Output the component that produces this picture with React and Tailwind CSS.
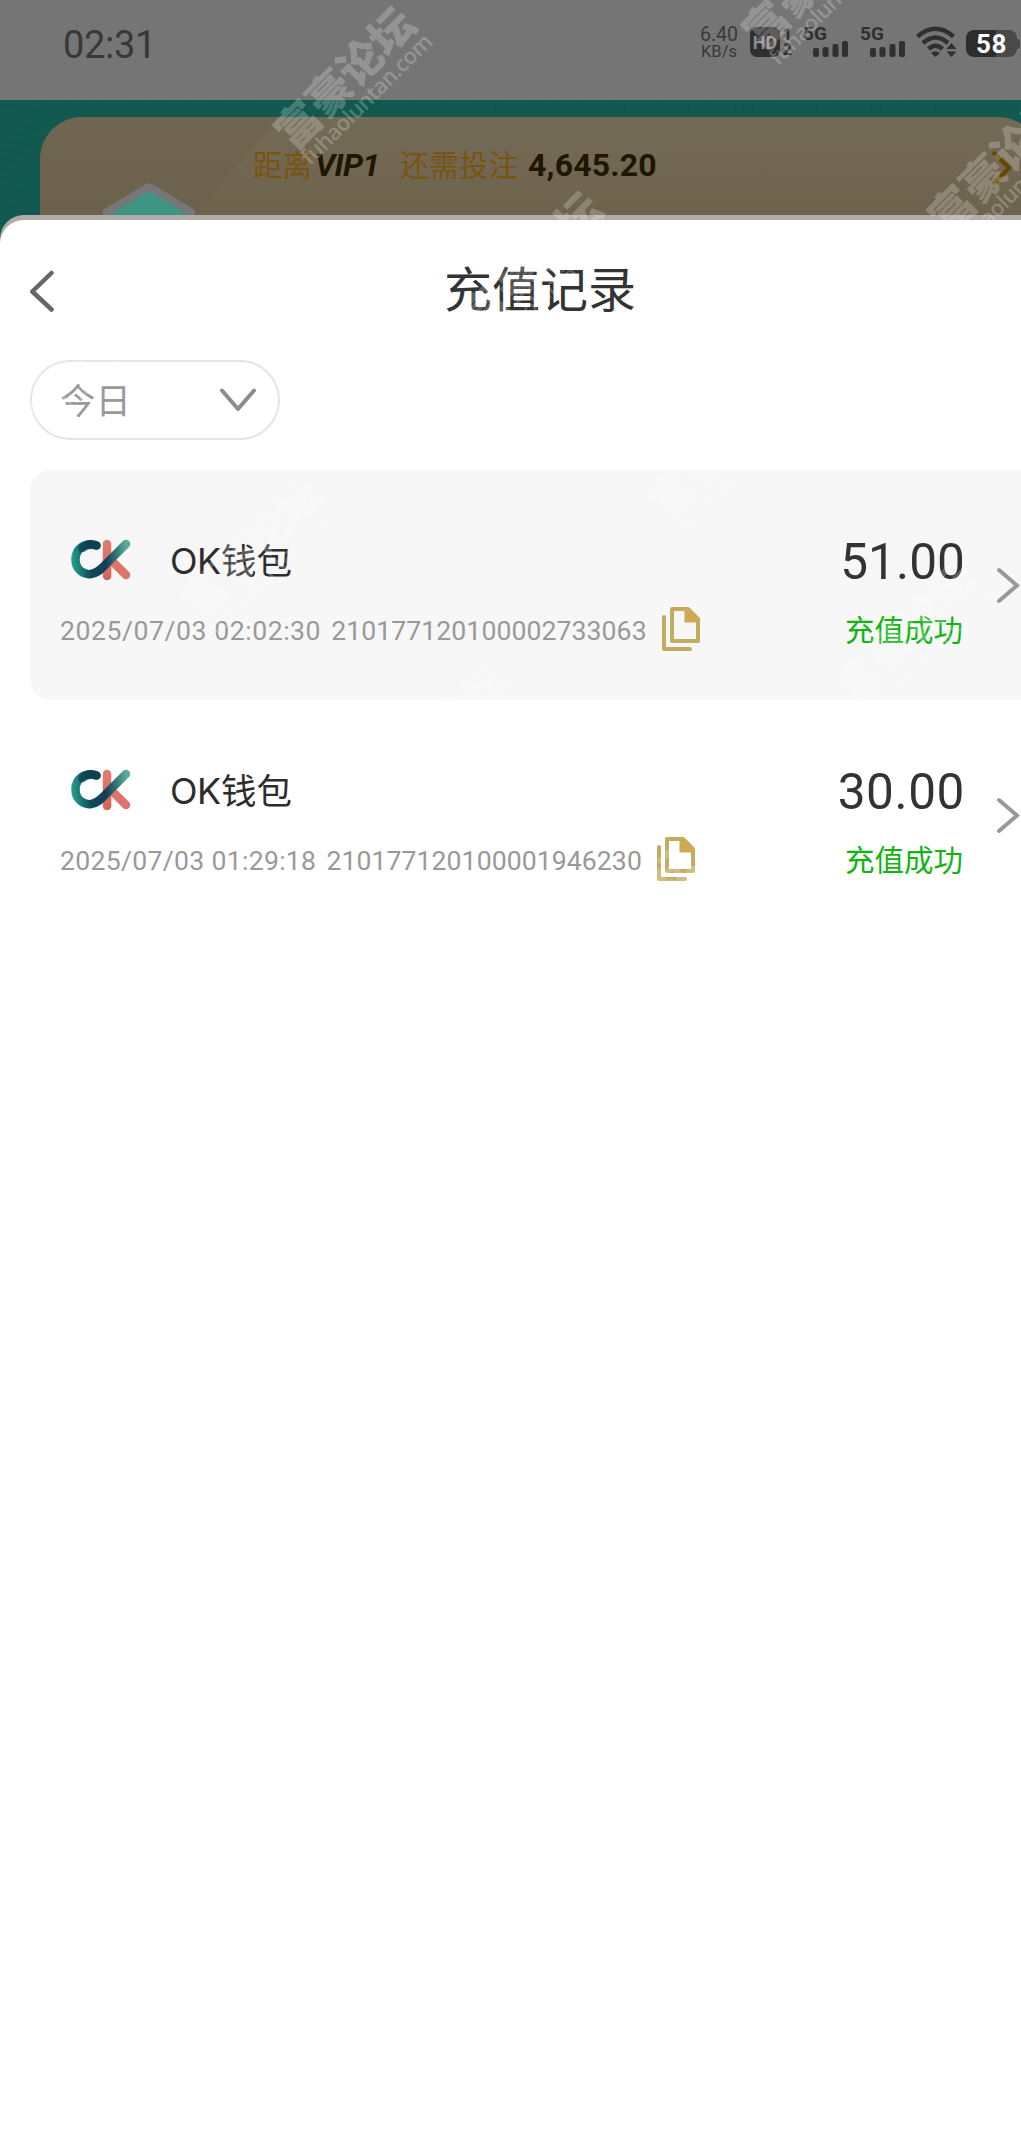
import React from "react";

const records = [
  {
    name: "钱包",
    time: "2025/07/03 02:02:30",
    timeClass: "tracking-[0.550px]",
    order: "210177120100002733063",
    amount: "51.00",
    amountClass: "tracking-[0.100px]",
    active: true,
  },
  {
    name: "钱包",
    time: "2025/07/03 01:29:18",
    timeClass: "tracking-[0.300px]",
    order: "210177120100001946230",
    amount: "30.00",
    amountClass: "tracking-[0.600px]",
    active: false,
  },
];

const marks = [
  [352, 85],
  [820, -15],
  [539, 270],
  [1006, 170],
  [72, 370],
  [726, 455],
  [259, 555],
  [913, 640],
  [446, 740],
  [633, 925],
];

function Watermarks() {
  return (
    <div className="absolute inset-0 overflow-hidden pointer-events-none">
      {marks.map(([x, y]) => (
        <div
          key={`${x}-${y}`}
          className="absolute w-[200px] h-[72px] -ml-[100px] -mt-[36px] -rotate-45 text-center text-white/24 whitespace-nowrap"
          style={{ left: x, top: y }}
        >
          <div className="font-['Noto_Sans_CJK_SC',sans-serif] font-black text-[44px] leading-[46px]">富豪论坛</div>
          <div className="-mt-[4px] font-['Open_Sans',sans-serif] font-semibold text-[22px] leading-[26px] tracking-[-0.600px]">fuhaoluntan.com</div>
        </div>
      ))}
    </div>
  );
}

function Signal() {
  return (
    <div className="w-[45px] h-[30px] flex flex-col">
      <span className="font-bold text-[19px] leading-[14px] h-[14px]">5G</span>
      <svg className="ml-[10px] w-[36px] h-[16px]" viewBox="0 0 36 16" fill="#303030">
        <rect x="0" y="7" width="6" height="9" rx="2" />
        <rect x="9.5" y="6" width="6" height="10" rx="2" />
        <rect x="19.5" y="3" width="6" height="13" rx="2" />
        <rect x="29" y="0" width="6" height="16" rx="2" />
      </svg>
    </div>
  );
}

function StatusBar() {
  return (
    <div className="h-[100px] bg-[#757575] flex items-start text-[#303030]">
      <div className="ml-[63px] mt-[25px] w-[95px] text-[38px] leading-[40px] tracking-[-0.300px] text-[#383838]">02:31</div>
      <div className="ml-[540px] mt-[26px] w-[42px] text-center text-[#383838]">
        <div className="text-[19.500px] leading-[17px]">6.40</div>
        <div className="text-[16.500px] leading-[17px]">KB/s</div>
      </div>
      <div className="ml-[10px] mt-[27px] w-[30px] h-[30px] rounded-[7px] bg-[#303030] text-[#8a8a8a] font-bold text-[18px] leading-[31px] text-center">
        HD
      </div>
      <div className="ml-[2px] mt-[27px] w-[11px] text-center font-bold text-[17px] leading-[15px]">
        <div>1</div>
        <div>2</div>
      </div>
      <div className="ml-[10px] mt-[27px]">
        <Signal />
      </div>
      <div className="ml-[12px] mt-[27px]">
        <Signal />
      </div>
      <svg className="ml-[11px] mt-[26px] w-[42px] h-[32px]" viewBox="0 0 42 32" fill="none" stroke="#303030" strokeWidth="4.500">
        <path d="M1.5 10.5 Q19.500 -5 37.500 10.500" />
        <path d="M7 17 Q19.500 6 32 17" />
        <path d="M12.500 23 Q19.500 16.500 26.500 23" />
        <path d="M15 27 Q19.500 23.500 24 27 L19.500 31 Z" fill="#303030" stroke="none" />
        <path d="M30.500 23 L35.500 17 L40.500 23 Z M30.500 25.500 L35.500 31 L40.500 25.500 Z" fill="#303030" stroke="none" />
      </svg>
      <div className="ml-[8px] mt-[30px] flex items-center">
        <div className="w-[51px] h-[27px] rounded-[8px] bg-linear-to-r from-[#2d2d2d] from-58% to-[#494949] to-58% text-white font-bold text-[26px] leading-[29px] tracking-[0.500px] text-center">
          58
        </div>
        <div className="w-[3px] h-[10px] rounded-r-[3px] bg-[#494949]" />
      </div>
    </div>
  );
}

function VipBanner() {
  return (
    <div className="relative h-[140px] px-[40px] pt-[17px] bg-[#125a4f] bg-[repeating-radial-gradient(circle_at_0_140px,#125a4f_0,#125a4f_7px,#15544c_9px)]">
      <div className="relative h-[123px] rounded-t-[42px] overflow-hidden bg-linear-to-b from-[#746b57] to-[#6c6049] flex">
        <svg className="absolute left-0 top-0 w-[300px] h-[123px]" viewBox="0 0 300 123">
          <path d="M0 0 H240 L150 102 V123 H0 Z" fill="#6b604c" opacity="0.45" />
          <path d="M63 93 L104 68 Q109 65 114 68 L155 93 V123 H63 Z" fill="#77777a" />
          <path d="M72 96 L105 76 Q109 74 113 76 L145 96 V123 H72 Z" fill="#3f9483" />
        </svg>
        <div className="mt-[26px] ml-[213px] flex items-center h-[44px] leading-[44px] whitespace-nowrap">
          <span className="-mt-[4px] w-[62px] font-['Noto_Sans_CJK_SC',sans-serif] text-[29.500px] text-[#79540f]">距离</span>
          <span className="w-[85px] font-bold italic text-[32px] tracking-[-0.700px] text-[#1f1600]">VIP1</span>
          <span className="-mt-[4px] w-[128px] font-['Noto_Sans_CJK_SC',sans-serif] text-[29.500px] text-[#79540f]">还需投注</span>
          <span className="font-bold text-[32px] tracking-[0.200px] text-[#1f1600]">4,645.20</span>
        </div>
        <svg className="ml-auto mr-[27px] mt-[32px] w-[22px] h-[38px]" viewBox="0 0 22 38" fill="none" stroke="#664600" strokeWidth="4">
          <path d="M2 3 L18 19 L2 35" />
        </svg>
      </div>
    </div>
  );
}

function WalletLogo({ id }) {
  return (
    <svg className="w-[60px] h-[42px]" viewBox="0 0 60 42" fill="none" strokeLinecap="round" strokeWidth="8.500">
      <defs>
        <linearGradient id={`${id}-c`} gradientUnits="userSpaceOnUse" x1="2" y1="20" x2="56" y2="14">
          <stop offset="0" stopColor="#249a87" />
          <stop offset="0.3" stopColor="#0d4a5a" />
          <stop offset="0.600" stopColor="#133f58" />
          <stop offset="1" stopColor="#58ad97" />
        </linearGradient>
        <linearGradient id={`${id}-k`} gradientUnits="userSpaceOnUse" x1="36" y1="4" x2="37" y2="38">
          <stop offset="0" stopColor="#e07c6e" />
          <stop offset="1" stopColor="#d5655b" />
        </linearGradient>
      </defs>
      <path d="M36 5 L36.100 37" stroke={`url(#${id}-k)`} />
      <path d="M38 19 L55 36" stroke="#dc7468" />
      <path d="M25.500 6.500 C14 2.500 4.500 10 4.500 20.500 C4.500 31 13 36 20 35 C27 34 30 30 34 26 L55 5" stroke={`url(#${id}-c)`} />
      <path d="M25.500 6.500 C20 4.800 15 6 11.500 9" stroke="#0c3f50" strokeOpacity="0.700" />
    </svg>
  );
}

function CopyIcon() {
  return (
    <svg className="w-[38px] h-[44px]" viewBox="0 0 38 44" fill="none" stroke="#c4ab62" strokeWidth="4" strokeLinecap="round" strokeLinejoin="round">
      <path d="M2 10 V42 H28" />
      <path d="M10 2 H26 L36 12 V34 H10 Z" />
      <path d="M22.500 2 V15.500 H36 V12 L26 2 Z" fill="#d0aa50" stroke="none" />
    </svg>
  );
}

function RecordCard({ record, id }) {
  return (
    <div className={`h-[230px] rounded-[20px] flex items-start ${record.active ? "bg-[#f7f7f7]" : "bg-white"}`}>
      <div className="ml-[30px] pt-[62px]">
        <div className="h-[56px] flex items-center">
          <div className="ml-[11px] w-[99px]">
            <WalletLogo id={id} />
          </div>
          <div className="flex items-center h-[56px] leading-[56px] text-[#2d2d2d]">
            <span className="font-['Inter',sans-serif] w-[51px] text-[36px] tracking-[-0.500px] pt-[2px]">OK</span>
            <span className="-mt-[2px] font-['Noto_Sans_CJK_SC',sans-serif] text-[35.500px]">{record.name}</span>
          </div>
        </div>
        <div className="mt-[19px] h-[44px] flex items-center text-[26.600px] text-[#999999] whitespace-nowrap">
          <span className={`pt-[3px] ${record.timeClass}`}>{record.time}</span>
          <span className="pt-[3px] ml-[10px] mr-[15px] tracking-[0.080px]">{record.order}</span>
          <CopyIcon />
        </div>
      </div>
      <div className="ml-auto pt-[62px] text-right">
        <div className={`h-[60px] leading-[61px] text-[49.500px] text-[#333333] ${record.amountClass}`}>{record.amount}</div>
        <div className="mt-[14px] h-[44px] pr-[2px] leading-[44px] font-['Noto_Sans_CJK_SC',sans-serif] text-[29.500px] text-[#12b412]">充值成功</div>
      </div>
      <svg className="ml-[29px] mr-[30px] mt-[97px] w-[26px] h-[38px]" viewBox="0 0 26 38" fill="none" stroke="#999" strokeWidth="4" strokeLinecap="round">
        <path d="M5 3 L23 18.500 L5 34" />
      </svg>
    </div>
  );
}

export default function App() {
  return (
    <div className="relative w-full h-[2137px] overflow-hidden bg-white font-['Roboto',sans-serif]">
      <div className="w-[1080px]">
        <StatusBar />
        <VipBanner />

        {/* Bottom sheet */}
        <div className="relative -mt-[25px] pt-[5px] rounded-t-[24px] bg-[#b0aba8]">
          <div className="h-[1917px] rounded-t-[24px] bg-white px-[30px]">
            <div className="h-[140px] flex items-center">
              <svg className="w-[26px] h-[44px]" viewBox="0 0 26 44" fill="none" stroke="#666" strokeWidth="4.500" strokeLinecap="round" strokeLinejoin="round">
                <path d="M21.500 5 L2.300 23.500 L21.500 41.500" />
              </svg>
              <h1 className="flex-1 -mt-[8px] pr-[26px] text-center font-['Noto_Sans_CJK_SC',sans-serif] text-[48px] leading-[60px] text-[#333333]">充值记录</h1>
            </div>

            <div className="w-[250px] h-[80px] rounded-full border-2 border-[#e4e4e4] flex items-center justify-between pl-[28px] pr-[22px]">
              <span className="-mt-[3px] font-['Noto_Sans_CJK_SC',sans-serif] text-[35.500px] leading-[44px] text-[#999999]">今日</span>
              <svg className="w-[36px] h-[24px]" viewBox="0 0 36 24" fill="none" stroke="#8c8c8c" strokeWidth="4" strokeLinecap="round" strokeLinejoin="round">
                <path d="M2 2.500 L18 21 L34 2.500" />
              </svg>
            </div>

            <div className="mt-[30px]">
              {records.map((record, i) => (
                <RecordCard key={record.order} record={record} id={`wallet${i}`} />
              ))}
            </div>
          </div>
        </div>
      </div>
      <Watermarks />
    </div>
  );
}
